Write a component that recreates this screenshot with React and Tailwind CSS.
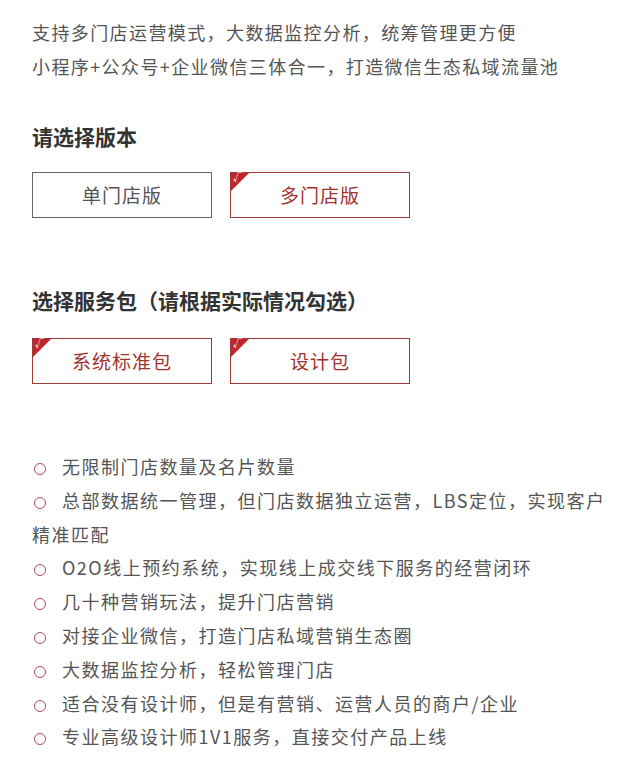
const font = { fontFamily: '"Noto Sans CJK SC", "Noto Sans", sans-serif' };

const versions = [
  { id: 'single', label: '单门店版', checked: false },
  { id: 'multi', label: '多门店版', checked: true },
];

const packages = [
  { id: 'std', label: '系统标准包', checked: true },
  { id: 'design', label: '设计包', checked: true },
];

const features = [
  '无限制门店数量及名片数量',
  '总部数据统一管理，但门店数据独立运营，LBS定位，实现客户精准匹配',
  'O2O线上预约系统，实现线上成交线下服务的经营闭环',
  '几十种营销玩法，提升门店营销',
  '对接企业微信，打造门店私域营销生态圈',
  '大数据监控分析，轻松管理门店',
  '适合没有设计师，但是有营销、运营人员的商户/企业',
  '专业高级设计师1V1服务，直接交付产品上线',
];

function Option({ label, checked }) {
  return (
    <div
      className={`relative w-[180px] h-[46px] flex items-center justify-center border-[1.5px] text-[19px] tracking-[1px] ${
        checked ? 'border-[#9c3a35] text-[#a3322c]' : 'border-[#666] text-[#555]'
      }`}
    >
      {checked && (
        <div className="absolute left-0 top-0 w-[18px] h-[18px]">
          <div className="absolute left-0 top-0 w-0 h-0 border-t-[18px] border-r-[18px] border-t-[#c0272d] border-r-transparent" />
          <span className="absolute left-[2px] top-0 text-[9px] leading-[10px] text-white font-bold">√</span>
        </div>
      )}
      {label}
    </div>
  );
}

export default function App() {
  return (
    <div className="bg-white w-[640px] px-8 pt-[15px] pb-6" style={font}>
      <p className="text-[18px] leading-[34px] tracking-[1.4px] text-[#555]">支持多门店运营模式，大数据监控分析，统筹管理更方便</p>
      <p className="text-[18px] leading-[34px] tracking-[1.4px] text-[#555]">小程序+公众号+企业微信三体合一，打造微信生态私域流量池</p>

      <h2 className="mt-[38px] text-[21px] leading-[30px] font-bold text-[#333]">请选择版本</h2>
      <div className="mt-[21px] flex gap-[18px]">
        {versions.map(v => <Option key={v.id} {...v} />)}
      </div>

      <h2 className="mt-[67px] text-[21px] leading-[30px] font-bold text-[#333]">选择服务包（请根据实际情况勾选）</h2>
      <div className="mt-[23px] flex gap-[18px]">
        {packages.map(p => <Option key={p.id} {...p} />)}
      </div>

      <ul className="mt-[66px]">
        {features.map(f => (
          <li key={f} className="text-[18px] leading-[33.8px] tracking-[1.5px] text-[#555]">
            <span className="inline-block w-[12px] h-[12px] rounded-full border-[1.5px] border-[#b5495b] ml-[2px] mr-[16px] align-[-1px]" />
            {f}
          </li>
        ))}
      </ul>
    </div>
  );
}
